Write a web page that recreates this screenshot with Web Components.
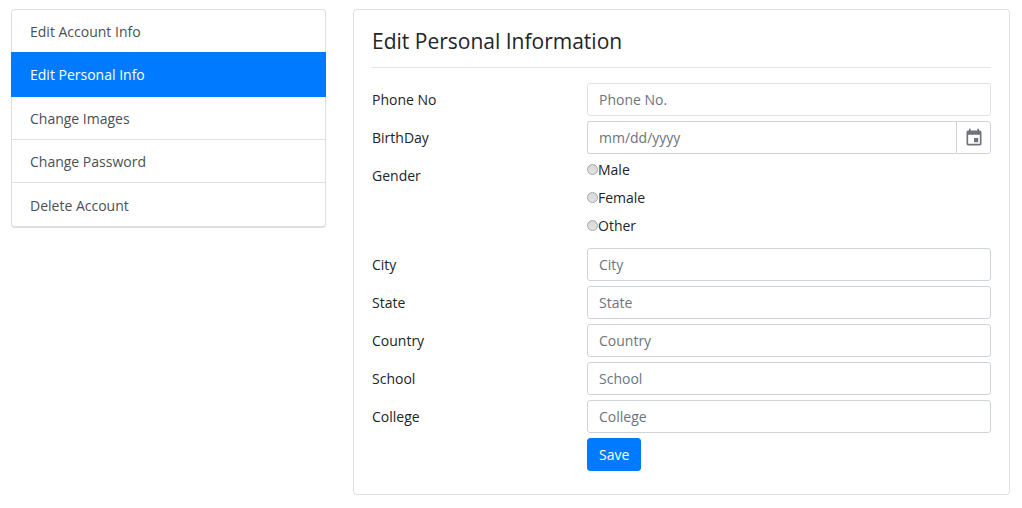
<!DOCTYPE html>
<html lang="en">
<head>
<meta charset="utf-8">
<meta name="viewport" content="width=device-width, initial-scale=1">
<title>Edit Personal Information</title>
<style>
  body {
    margin: 0;
    background: #fff;
    color: #212529;
    font: 14px/21px "Segoe UI", "Open Sans", sans-serif;
  }
</style>
</head>
<body>
<settings-page>
  <side-menu slot="menu">
    <menu-item>Edit Account Info</menu-item>
    <menu-item active>Edit Personal Info</menu-item>
    <menu-item>Change Images</menu-item>
    <menu-item>Change Password</menu-item>
    <menu-item>Delete Account</menu-item>
  </side-menu>
  <form-card heading="Edit Personal Information">
    <text-field label="Phone No" placeholder="Phone No." type="tel" soft></text-field>
    <date-field label="BirthDay" placeholder="mm/dd/yyyy"></date-field>
    <radio-field label="Gender" options="Male,Female,Other"></radio-field>
    <text-field label="City" placeholder="City"></text-field>
    <text-field label="State" placeholder="State"></text-field>
    <text-field label="Country" placeholder="Country"></text-field>
    <text-field label="School" placeholder="School"></text-field>
    <text-field label="College" placeholder="College"></text-field>
    <save-action>Save</save-action>
  </form-card>
</settings-page>

<script>
  const rowStyles = `
    *, ::before { box-sizing: border-box; }
    :host { display: grid; grid-template-columns: 215fr 404fr; align-items: start; }
    .label { padding: 6px 0; }
    input, button { font: inherit; letter-spacing: inherit; margin: 0; }
    .control {
      width: 100%; min-width: 0; padding: 5px 11px;
      border: 1px solid #ced4da; border-radius: 3px;
      background: #fff; color: #495057;
    }
    .control::placeholder { color: #6c757d; opacity: 1; }
  `;

  class Base extends HTMLElement {
    connectedCallback() {
      if (this.shadowRoot) return;
      this.attachShadow({ mode: "open" }).innerHTML = this.render();
    }
    attr(name) { return this.getAttribute(name) || ""; }
  }

  customElements.define("settings-page", class extends Base {
    render() {
      return `<style>
        :host {
          display: grid; grid-template-columns: 35fr 73fr; gap: 27px;
          align-items: start; padding: 9px 12px 13px 11px;
        }
        main { min-width: 0; }
        @media (max-width: 600px) { :host { grid-template-columns: 1fr; } }
      </style>
      <slot name="menu"></slot><main><slot></slot></main>`;
    }
  });

  customElements.define("side-menu", class extends Base {
    render() {
      return `<style>
        :host { display: block; }
        nav { border: 1px solid #dfdfdf; border-bottom-width: 2px; border-radius: 4px; }
      </style>
      <nav aria-label="Account settings"><slot></slot></nav>`;
    }
  });

  customElements.define("menu-item", class extends Base {
    render() {
      return `<style>
        :host { display: block; border-bottom: 1px solid #dfdfdf; }
        a { display: block; padding: 11px 18px 10px; color: #495057; text-decoration: none; }
        :host(:last-of-type) { border-bottom: 0; }
        :host(:last-of-type) a { padding: 12px 18px 10px; }
        :host([active]) { margin: -1px -1px 0; border: 0; background: #007bff; }
        :host([active]) a { padding: 12px 19px; color: #fff; }
      </style>
      <a href="#"${this.hasAttribute("active") ? ' aria-current="page"' : ""}><slot></slot></a>`;
    }
  });

  customElements.define("form-card", class extends Base {
    render() {
      return `<style>
        :host { display: block; border: 1px solid #dfdfdf; border-radius: 4px; padding: 18px 18px 23px; }
        h1 { margin: 0; padding-bottom: 12px; border-bottom: 1px solid #e5e5e5; font-size: 21px; line-height: 27px; font-weight: 500; }
        form { display: flex; flex-direction: column; gap: 5px; margin-top: 15px; }
      </style>
      <h1>${this.attr("heading")}</h1>
      <form><slot></slot></form>`;
    }
  });

  customElements.define("text-field", class extends Base {
    render() {
      return `<style>${rowStyles}
        :host([soft]) .control { border-color: #dee2e6; }
      </style>
      <label class="label" for="field">${this.attr("label")}</label>
      <input class="control" id="field" type="${this.attr("type") || "text"}" placeholder="${this.attr("placeholder")}">`;
    }
  });

  customElements.define("date-field", class extends Base {
    render() {
      return `<style>${rowStyles}
        .group { display: flex; }
        .control { flex: 1; border-right: 0; border-radius: 3px 0 0 3px; }
        button {
          display: grid; place-items: center; width: 35px; padding: 0;
          border: 1px solid #ced4da; border-radius: 0 3px 3px 0; background: #fff; color: #6c757d;
        }
        svg { display: block; fill: currentColor; }
      </style>
      <label class="label" for="field">${this.attr("label")}</label>
      <div class="group">
        <input class="control" id="field" type="text" placeholder="${this.attr("placeholder")}">
        <button type="button" aria-label="Open calendar">
          <svg width="20" height="20" viewBox="0 0 24 24" aria-hidden="true"><path d="M17 12h-5v5h5v-5zM16 1v2H8V1H6v2H5c-1.100 0-2 .9-2 2v14c0 1.100.9 2 2 2h14c1.100 0 2-.9 2-2V5c0-1.100-.9-2-2-2h-1V1h-2zm3 18H5V8h14v11z"/></svg>
        </button>
      </div>`;
    }
  });

  customElements.define("radio-field", class extends Base {
    render() {
      const options = this.attr("options").split(",").map(name =>
        `<label><input type="radio" name="choice" value="${name}">${name}</label>`).join("");
      return `<style>${rowStyles}
        .options { display: flex; flex-direction: column; align-items: start; gap: 7px; padding-bottom: 7px; }
        .options label { display: flex; align-items: center; }
        input {
          appearance: none; width: 11px; height: 11px; border: 1px solid #a8a8a8;
          border-radius: 50%; background: linear-gradient(#d8d8d8, #e2e2e2);
        }
        input:checked { background: radial-gradient(#444 35%, #ddd 40%); }
      </style>
      <span class="label" id="caption">${this.attr("label")}</span>
      <div class="options" role="radiogroup" aria-labelledby="caption">${options}</div>`;
    }
  });

  customElements.define("save-action", class extends Base {
    render() {
      return `<style>${rowStyles}
        button {
          grid-column: 2; justify-self: start; padding: 5px 11px;
          border: 1px solid #007bff; border-radius: 3px; background: #007bff; color: #fff;
        }
      </style>
      <button type="submit"><slot></slot></button>`;
    }
  });
</script>
</body>
</html>
